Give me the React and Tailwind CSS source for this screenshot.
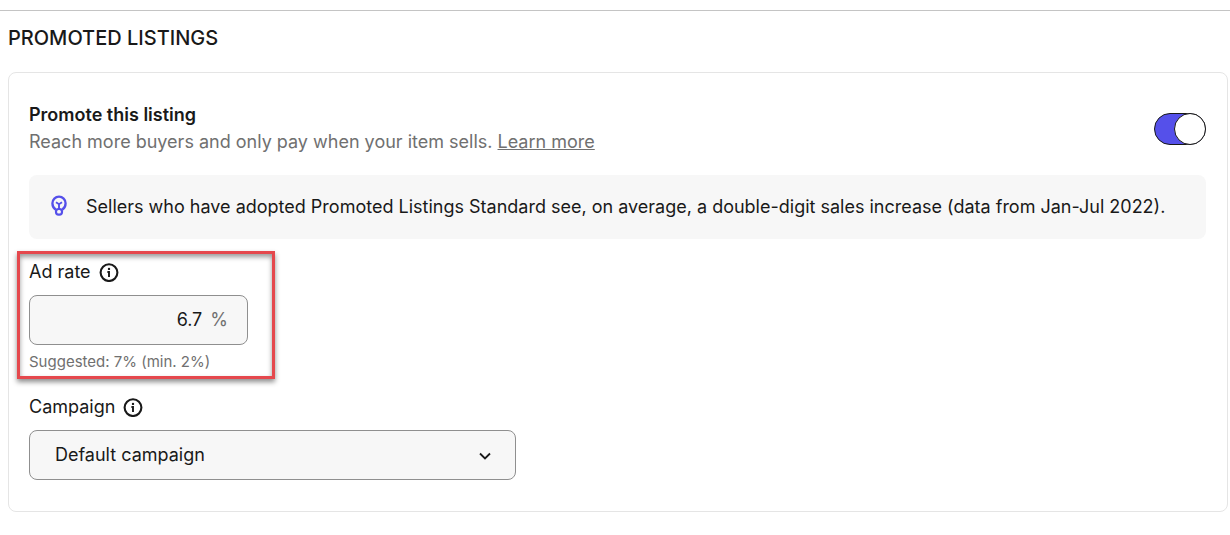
import React, { useState } from 'react';

const InfoIcon = () => (
  <svg className="h-5 w-5" viewBox="0 0 20 20" fill="none" aria-hidden="true">
    <circle cx="10" cy="10.6" r="8.4" stroke="#191919" strokeWidth="2.1" />
    <circle cx="10" cy="6.900" r="1.2" fill="#191919" />
    <path d="M8.400 10H10v5" stroke="#191919" strokeWidth="1.9" />
  </svg>
);

const BulbIcon = () => (
  <svg className="h-6 w-5 shrink-0" viewBox="0 0 20 24" fill="none" stroke="#5550ea" aria-hidden="true">
    <path d="M6.8 14.8C4.4 13.2 3.4 10.800 3.4 8.300a6.600 6.600 0 0 1 13.200 0c0 2.500-1 4.900-3.400 6.500" strokeWidth="2.300" />
    <path d="M7 7.200 10 9.200l3-2M10 9v5" strokeWidth="1.900" />
    <rect x="7" y="14" width="6" height="5.600" rx="2.600" strokeWidth="2.200" />
  </svg>
);

const FieldLabel = ({ htmlFor, children }) => (
  <div className="flex items-center gap-2">
    <label htmlFor={htmlFor}>{children}</label>
    <button type="button" aria-label={`About ${children}`}>
      <InfoIcon />
    </button>
  </div>
);

const App = () => {
  const [promoted, setPromoted] = useState(true);
  const [adRate, setAdRate] = useState('6.7');
  const [campaign, setCampaign] = useState('default');

  return (
    <div className="bg-white pt-[10px] font-['Inter',sans-serif] text-lg/6 text-[#191919]">
      <section className="border-t border-[#c4c4c4] pt-[15px] pr-0.5 pl-2">
        <h2 className="text-xl/6 font-medium">PROMOTED LISTINGS</h2>

        <div className="mt-[22px] rounded-lg border border-[#e5e5e5] pt-[30px] pr-[21px] pb-[31px] pl-5">
          <div className="flex items-center justify-between">
            <div>
              <h3 className="font-semibold">Promote this listing</h3>
              <p className="mt-[3px] text-[#707070]">
                Reach more buyers and only pay when your item sells.{' '}
                <a href="#learn" className="underline">Learn more</a>
              </p>
            </div>

            <label className="relative block h-8 w-[52px] cursor-pointer">
              <input
                type="checkbox"
                aria-label="Promote this listing"
                checked={promoted}
                onChange={(e) => setPromoted(e.target.checked)}
                className="peer h-8 w-[52px] appearance-none rounded-full border border-[#191919] bg-[#8f8f8f] checked:bg-[#5550ea]"
              />
              <span className="absolute top-0 left-0 h-8 w-8 rounded-full border border-[#191919] bg-white peer-checked:right-0 peer-checked:left-auto" />
            </label>
          </div>

          <div className="mt-[21px] flex min-h-16 items-center gap-[17px] rounded-lg bg-[#f7f7f7] px-5">
            <BulbIcon />
            <p>
              Sellers who have adopted Promoted Listings Standard see, on average, a double-digit sales increase (data from Jan-Jul 2022).
            </p>
          </div>

          {/* Ad rate */}
          <div className="mt-3 -ml-3 w-[258px] border-[3px] border-[#e5484d] px-[9px] pt-1.5 pb-1 shadow-[0_3px_5px_rgba(0,0,0,0.45),inset_0_3px_5px_rgba(0,0,0,0.4)]">
            <FieldLabel htmlFor="ad-rate">Ad rate</FieldLabel>
            <div className="mt-[11px] flex h-[50px] w-[219px] items-center gap-2 rounded-lg border border-[#8f8f8f] bg-[#f7f7f7] pr-[19px]">
              <input
                id="ad-rate"
                type="text"
                inputMode="decimal"
                value={adRate}
                onChange={(e) => setAdRate(e.target.value)}
                className="min-w-0 flex-1 bg-transparent text-right outline-none"
              />
              <span className="text-[#707070]">%</span>
            </div>
            <p className="mt-[7px] text-[15px]/5 text-[#707070]">Suggested: 7% (min. 2%)</p>
          </div>

          {/* Campaign */}
          <div className="mt-4">
            <FieldLabel htmlFor="campaign">Campaign</FieldLabel>
            <div className="relative mt-[11px] max-w-[487px]">
              <select
                id="campaign"
                value={campaign}
                onChange={(e) => setCampaign(e.target.value)}
                className="h-[50px] w-full appearance-none rounded-lg border border-[#8f8f8f] bg-[#f7f7f7] pr-12 pl-[25px]"
              >
                <option value="default">Default campaign</option>
              </select>
              <svg className="pointer-events-none absolute top-5 right-6 h-3 w-3.5" viewBox="0 0 14 12" fill="none" aria-hidden="true">
                <path d="m2 3.5 5 5 5-5" stroke="#191919" strokeWidth="1.8" />
              </svg>
            </div>
          </div>
        </div>
      </section>
    </div>
  );
};

export default App;
